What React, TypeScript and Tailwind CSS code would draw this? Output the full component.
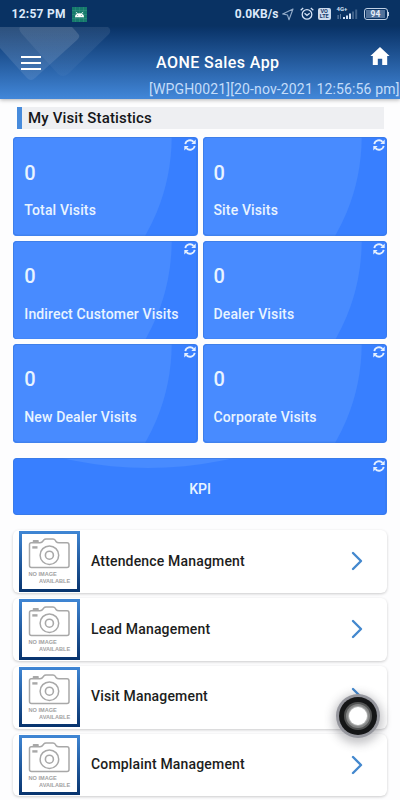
import React from "react";

const stats = [
  "Total Visits",
  "Site Visits",
  "Indirect Customer Visits",
  "Dealer Visits",
  "New Dealer Visits",
  "Corporate Visits",
];

const menu = ["Attendence Managment", "Lead Management", "Visit Management", "Complaint Management"];

function SyncIcon() {
  return (
    <svg className="absolute top-[2px] right-[2px] h-[12px] w-[12px]" viewBox="0 0 12 12" fill="none" stroke="#e4f0ff" strokeWidth="1.8">
      <path d="M1.3 5.2A4.8 4.8 0 0 1 9.6 2.9M10.7 6.8A4.8 4.8 0 0 1 2.4 9.1" />
      <path d="M11.7.5v4.4H7.3zM.3 11.5V7.1h4.4z" fill="#e4f0ff" stroke="none" />
    </svg>
  );
}

function StatCard({ label }: { label: string }) {
  return (
    <div className="relative h-[98.6px] overflow-hidden rounded-[4px] bg-[#387fff] pl-[11px] text-[#e9f4ff]">
      <svg className="absolute inset-0 h-full w-full" viewBox="0 0 184 98.6" preserveAspectRatio="none">
        <circle cx="-39" cy="0" r="197.5" fill="#488bff" />
        <rect x=".4" y=".4" width="183.2" height="97.8" rx="3.7" fill="none" stroke="#3b78dc" strokeWidth=".7" />
      </svg>
      <div className="relative pt-[23.4px] text-[20px] leading-[24px] font-medium">0</div>
      <div className="relative pt-[15.8px] text-[14px] leading-[20px] font-medium tracking-[0.14px] whitespace-nowrap">{label}</div>
      <SyncIcon />
    </div>
  );
}

function NoImage() {
  return (
    <div className="ml-[5.5px] h-[60.5px] w-[61px] shrink-0 bg-linear-to-b from-[#4087d5] to-[#07336d] p-[3px]">
      <div className="relative h-full w-full bg-white">
        <svg className="absolute inset-0 h-full w-full" viewBox="0 0 55 54.5" fill="none" stroke="#a8a8a8" strokeWidth="1.5" strokeLinejoin="round">
          <path d="M9.2 8.7H18Q20 8.7 21 7L22 5.8Q22.5 5 24 5H31Q32.5 5 33.2 6.2L34.2 7.8Q35 8.8 37 8.8H45Q47 8.8 47 11V31.5Q47 33.5 45 33.5H9.5Q7.5 33.5 7.5 31.5V10.5Q7.5 8.7 9.2 8.7Z" />
          <circle cx="27.4" cy="21.2" r="9.3" />
          <circle cx="27.4" cy="21.2" r="4" strokeWidth="1.6" />
          <path d="M11.5 8V6.8h4.5V8z" />
          <path d="M10.3 12.2h5.2v2.4h-5.2z" fill="#a8a8a8" stroke="none" />
        </svg>
        <div className="absolute top-[37px] left-[6.7px] font-['Liberation_Sans',sans-serif] text-[5.6px] leading-[7px] font-bold tracking-[0px] whitespace-nowrap text-[#a2a2a2]">
          <div>NO IMAGE</div>
          <div className="pl-[10.6px]">AVAILABLE</div>
        </div>
      </div>
    </div>
  );
}

function StatusIcons() {
  return (
    <div className="flex items-center text-[#d3e1f5]">
      <svg className="ml-[3px] h-[14px] w-[12px]" viewBox="0 0 12 14" fill="none" stroke="#91aac8" strokeWidth="1.1" strokeLinejoin="round">
        <path d="M11 2 .7 6.9 5.5 8 7 12.8z" />
      </svg>
      <svg className="ml-[6px] h-[14px] w-[14px]" viewBox="0 0 14 14" fill="none" stroke="currentColor" strokeWidth="1.3">
        <circle cx="7" cy="7.4" r="4.8" />
        <path d="M.7 3.2 3.2 1M13.3 3.2 10.8 1M4.5 6.2 7 8.3l2.7-2" />
      </svg>
      <div className="ml-[4.5px] h-[12px] w-[12.5px] rounded-[2px] bg-[#cddbed] pt-[0.5px] text-center text-[5.5px] leading-[5.3px] font-bold text-[#12386b]">
        <div>VO</div>
        <div>LTE</div>
      </div>
      <div className="relative ml-[6px] h-[14px] w-[21px]">
        <span className="absolute -top-[1px] left-0 text-[6px] leading-[6px] font-bold">4G+</span>
        <svg className="absolute inset-0 h-full w-full" viewBox="0 0 21 14" fill="currentColor">
          <path d="M.5 8h1.2v4H.5zM3 7h1v5H3z" opacity=".45" />
          <path d="M6 10h2v2H6zM9 8.5h2V12H9zM12 6.5h2V12h-2z" />
          <path d="M15 4.5h2V12h-2zM18.2 2.5h2V12h-2z" opacity=".28" />
        </svg>
      </div>
      <div className="ml-[6px] flex h-[12px] w-[24px] items-center justify-center rounded-[3px] border-[1.3px] border-[#c0d0e4]">
        <div className="h-[8px] w-[19px] bg-[#52729a] text-center text-[8.5px] leading-[8px] font-bold text-[#e7effa]">94</div>
      </div>
      <div className="h-[4px] w-[1.5px] bg-[#c0d0e4]" />
    </div>
  );
}

export default function App() {
  return (
    <div className="relative h-[800px] w-[400px] overflow-hidden bg-[#fdfdfe] font-[Roboto,sans-serif]">
      <header className="relative h-[99px] bg-[linear-gradient(to_bottom,#093263_0px,#093263_26px,#0c376d_31px,#4287d9_99px)] text-white shadow-[0_1px_4px_rgba(0,0,0,0.3)]">
        <svg className="absolute top-0 left-0 h-[99px] w-[120px]" viewBox="0 0 120 99">
          <defs>
            <linearGradient id="near" x1="0" y1="27" x2="0" y2="80" gradientUnits="userSpaceOnUse">
              <stop stopColor="#fff" stopOpacity=".15" />
              <stop offset="1" stopColor="#fff" stopOpacity=".08" />
            </linearGradient>
            <linearGradient id="far" x1="0" y1="27" x2="0" y2="76" gradientUnits="userSpaceOnUse">
              <stop stopColor="#fff" stopOpacity=".09" />
              <stop offset="1" stopColor="#fff" stopOpacity=".03" />
            </linearGradient>
          </defs>
          <path d="M0 27H72Q76 31 79 35Q80 37 77 40L35 78Q31 82 27 78L0 48Z" fill="url(#near)" />
          <path d="M20 27H108Q112 30 109 34L68 74Q63 78 58 74L22 34Q18 29 20 27Z" fill="url(#far)" />
        </svg>
        <div className="relative flex h-[28px] items-center justify-between pr-[11px] pl-[11.5px] text-[#dce9fa]">
          <div className="flex items-center">
            <span className="text-[12px] leading-[16px] font-bold tracking-[0.25px] whitespace-nowrap">12:57 PM</span>
            <svg className="ml-[6px] h-[15px] w-[15px]" viewBox="0 0 15 15">
              <path d="M0 0h15v15H0z" fill="#167b6c" />
              <path d="M3.5 0v15M7.5 0v15M11.5 0v15M0 3.5h15M0 7.5h15M0 11.5h15" stroke="#3f9689" strokeWidth=".4" />
              <path d="M3 10.2Q3 6.5 7.5 6.2Q12 6.5 12 10.2Z" fill="#fff" />
              <path d="m4.3 5 1.2 2M10.7 5 9.5 7" stroke="#fff" strokeWidth=".8" />
              <path d="M5.3 8.2h.8v.8h-.8zM8.9 8.2h.8v.8h-.8z" fill="#167b6c" />
            </svg>
          </div>
          <div className="flex items-center">
            <span className="text-[12px] leading-[16px] font-bold tracking-[0.1px] whitespace-nowrap">0.0KB/s</span>
            <StatusIcons />
          </div>
        </div>
        <div className="relative flex h-[53px] items-center pr-[10px] pl-[21px]">
          <div className="mt-[17px] flex w-[20px] flex-col gap-[3.4px]">
            <i className="h-[2.4px] bg-white" />
            <i className="h-[2.4px] bg-white" />
            <i className="h-[2.4px] bg-white" />
          </div>
          <h1 className="mt-[16px] ml-[115px] text-[16px] leading-[20px] font-medium tracking-[0.43px] whitespace-nowrap">AONE Sales App</h1>
          <svg className="mt-[2px] ml-auto h-[20px] w-[20px]" viewBox="0 0 20 20" fill="#fff">
            <path d="M10 1 .4 10h2.4v9h5v-6.3h4.4V19h5v-9h2.4z" />
          </svg>
        </div>
        <div className="relative flex justify-end pr-[0.5px] text-[14px] leading-[16px] tracking-[0.14px] whitespace-nowrap text-[#c4ddfa]">[WPGH0021][20-nov-2021 12:56:56 pm]</div>
      </header>

      <main className="px-[13.3px] pt-[8px]">
        <div className="ml-[3.7px] h-[22px] w-[367px] border-l-[5px] border-[#478bdc] bg-[#eeeff2] pl-[6px] text-[15px] leading-[22px] font-medium tracking-[0.15px] text-[#151619]">
          My Visit Statistics
        </div>
        <div className="mt-[8.3px] grid grid-cols-2 gap-x-[5px] gap-y-[4.8px]">
          {stats.map((label) => (
            <StatCard key={label} label={label} />
          ))}
        </div>
        <div className="relative mt-[15.7px] flex h-[57px] items-center justify-center overflow-hidden rounded-[4px] bg-[#387fff] pt-[5px] text-[14px] font-medium text-[#e9f4ff]">
          <svg className="absolute inset-0 h-full w-full" viewBox="0 0 373.4 57">
            <circle cx="135" cy="-365" r="375" fill="#488bff" />
            <rect x=".4" y=".4" width="372.6" height="56.2" rx="3.7" fill="none" stroke="#3b78dc" strokeWidth=".7" />
          </svg>
          <span className="relative">KPI</span>
          <SyncIcon />
        </div>
        <div className="mt-[15px] flex flex-col gap-[5.2px]">
          {menu.map((label) => (
            <div key={label} className="flex h-[62.6px] items-center rounded-[6px] bg-white pr-[24px] shadow-[0_1px_3px_rgba(0,0,0,0.2)]">
              <NoImage />
              <span className="-mt-[1.5px] ml-[11.2px] text-[14px] leading-[20px] font-medium tracking-[0.17px] whitespace-nowrap text-[#1c1d20]">{label}</span>
              <svg className="-mt-[1px] ml-auto h-[20px] w-[12px]" viewBox="0 0 12 20" fill="none" stroke="#4388ce" strokeWidth="2.4" strokeLinecap="round" strokeLinejoin="round">
                <path d="m2 2 8 8-8 8" />
              </svg>
            </div>
          ))}
        </div>
      </main>

      <div className="absolute top-[694px] left-[335.5px] flex h-[44px] w-[44px] items-center justify-center rounded-full bg-[#95969d] shadow-[0_3px_10px_3px_rgba(60,60,70,0.3)]">
        <div className="flex h-[38px] w-[38px] items-center justify-center rounded-full bg-[#151617]">
          <div className="flex h-[28px] w-[28px] items-center justify-center rounded-full bg-[#525353]">
            <div className="flex h-[24px] w-[24px] items-center justify-center rounded-full bg-[#858686]">
              <div className="h-[18px] w-[18px] rounded-full bg-white shadow-[0_0_1px_1px_#b9baba]" />
            </div>
          </div>
        </div>
      </div>
    </div>
  );
}
